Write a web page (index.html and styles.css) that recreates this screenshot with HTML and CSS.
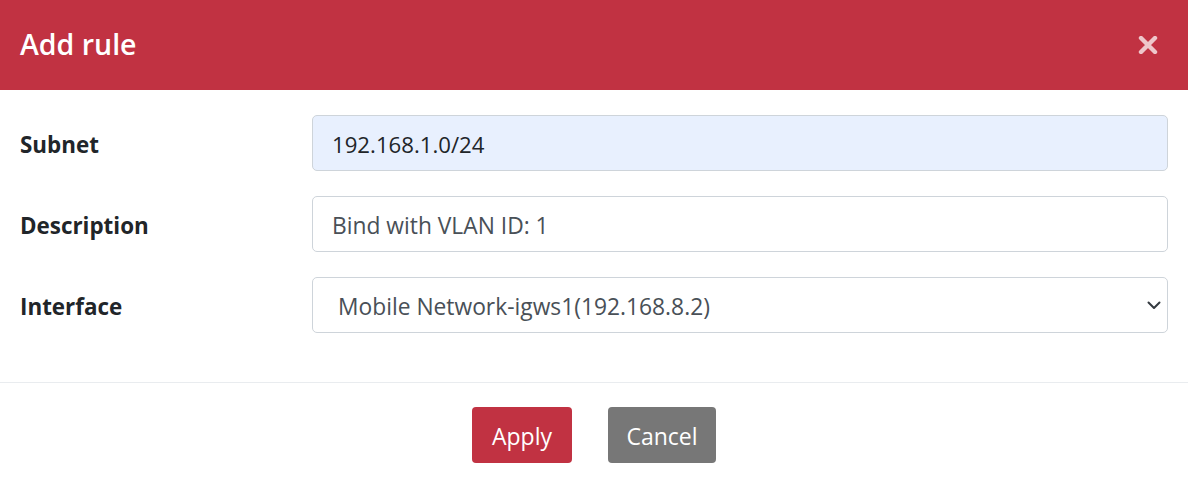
FILE: index.html
```html
<!DOCTYPE html>
<html lang="en">
<head>
<meta charset="utf-8">
<title>Add rule</title>
<link rel="stylesheet" href="styles.css">
</head>
<body>
<div class="modal">
  <div class="modal-header">
    <h1 class="modal-title">Add rule</h1>
    <button class="close" type="button" aria-label="Close">
      <svg width="20" height="18" viewBox="0 0 20 18"><path d="M3 2 L17 16 M17 2 L3 16" stroke="currentColor" stroke-width="4.4" stroke-linecap="round"/></svg>
    </button>
  </div>
  <form class="modal-body">
    <div class="form-row">
      <label class="form-label" for="subnet">Subnet</label>
      <input id="subnet" class="form-control autofill" type="text" value="192.168.1.0/24">
    </div>
    <div class="form-row">
      <label class="form-label" for="desc">Description</label>
      <input id="desc" class="form-control" type="text" value="Bind with VLAN ID: 1">
    </div>
    <div class="form-row">
      <label class="form-label" for="iface">Interface</label>
      <div class="select-wrap">
        <select id="iface" class="form-control form-select">
          <option>Mobile Network-igws1(192.168.8.2)</option>
        </select>
        <svg class="chevron" width="14" height="9" viewBox="0 0 14 9"><path d="M1.5 1.5 L7 7 L12.5 1.5" fill="none" stroke="#343a40" stroke-width="2" stroke-linecap="round" stroke-linejoin="round"/></svg>
      </div>
    </div>
  </form>
  <div class="modal-footer">
    <button class="btn btn-apply" type="button">Apply</button>
    <button class="btn btn-cancel" type="button">Cancel</button>
  </div>
</div>
</body>
</html>
```

FILE: styles.css
```css
* { box-sizing: border-box; }
html, body { margin: 0; padding: 0; background: #fff; }
body {
  font-family: "Open Sans", "Noto Sans", "Liberation Sans", sans-serif;
  color: #212529;
  width: 1188px;
  height: 487px;
  overflow: hidden;
}
.modal { display: flex; flex-direction: column; }
.modal-header {
  height: 90px;
  background: #c13242;
  display: flex;
  align-items: center;
  justify-content: space-between;
  padding: 0 30px 0 20px;
}
.modal-title {
  margin: 0;
  color: #fff;
  font-size: 28.5px;
  font-weight: 600;
  line-height: 1;
  padding-bottom: 2px;
}
.close {
  border: 0;
  background: none;
  padding: 0;
  color: rgba(255,255,255,0.72);
  display: flex;
}
.modal-body {
  margin: 0;
  padding: 25px 20px 49px 20px;
  display: flex;
  flex-direction: column;
  gap: 25px;
  border-bottom: 1px solid #e9ecef;
}
.form-row {
  display: grid;
  grid-template-columns: 292px 1fr;
  align-items: center;
}
.form-label {
  font-weight: 700;
  font-size: 22.4px;
  padding-top: 3px;
}
.form-control {
  width: 100%;
  height: 56px;
  border: 1px solid #ced4da;
  border-radius: 5px;
  background: #fff;
  padding: 3px 19px 0;
  font-family: inherit;
  font-size: 22.8px;
  color: #495057;
  outline: none;
}
.autofill { background: #e8f0fe; color: #212529; font-size: 22.2px; }
.select-wrap { position: relative; }
.form-select {
  appearance: none;
  -webkit-appearance: none;
  padding-left: 25px;
}
.chevron {
  position: absolute;
  right: 7px;
  top: 24px;
  pointer-events: none;
}
.modal-footer {
  display: flex;
  justify-content: center;
  gap: 36px;
  padding: 24px 0 24px;
}
.btn {
  height: 56px;
  border: 0;
  border-radius: 4px;
  color: #fff;
  font-family: inherit;
  font-size: 23px;
  padding: 2px 0 0;
}
.btn-apply { width: 100px; background: #c13242; }
.btn-cancel { width: 108px; background: #777777; }
```
